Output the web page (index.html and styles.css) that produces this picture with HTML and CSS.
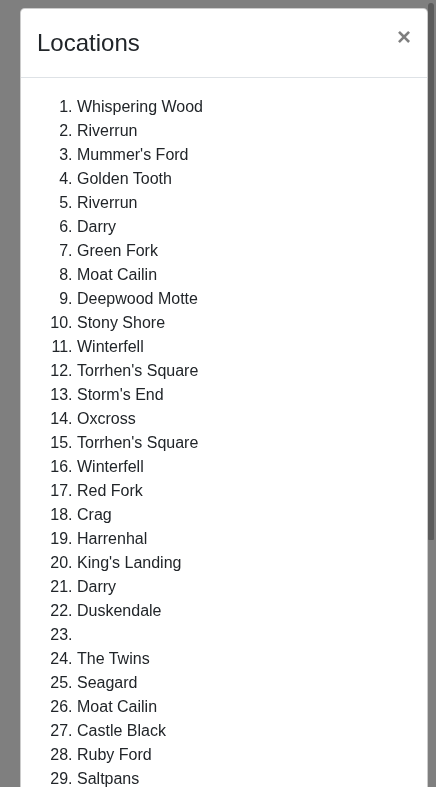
FILE: index.html
```html
<!DOCTYPE html>
<html>
<head>
<meta charset="utf-8">
<link rel="stylesheet" href="styles.css">
</head>
<body>
<div class="modal">
  <div class="dialog">
    <div class="content">
      <div class="header">
        <h3 class="title">Locations</h3>
        <button class="close" type="button">×</button>
      </div>
      <div class="body">
        <ol class="list">
          <li>Whispering Wood</li>
          <li>Riverrun</li>
          <li>Mummer's Ford</li>
          <li>Golden Tooth</li>
          <li>Riverrun</li>
          <li>Darry</li>
          <li>Green Fork</li>
          <li>Moat Cailin</li>
          <li>Deepwood Motte</li>
          <li>Stony Shore</li>
          <li>Winterfell</li>
          <li>Torrhen's Square</li>
          <li>Storm's End</li>
          <li>Oxcross</li>
          <li>Torrhen's Square</li>
          <li>Winterfell</li>
          <li>Red Fork</li>
          <li>Crag</li>
          <li>Harrenhal</li>
          <li>King's Landing</li>
          <li>Darry</li>
          <li>Duskendale</li>
          <li></li>
          <li>The Twins</li>
          <li>Seagard</li>
          <li>Moat Cailin</li>
          <li>Castle Black</li>
          <li>Ruby Ford</li>
          <li>Saltpans</li>
          <li>Riverrun</li>
          <li>Dragonstone</li>
          <li>Stoney Sept</li>
          <li>Acorn Hall</li>
          <li>Ruby Ford</li>
          <li>Wendish Town</li>
          <li>Duskendale</li>
          <li>Fist of the First Men</li>
          <li>Craster's Keep</li>
          <li>Eyrie</li>
          <li>Pyke</li>
          <li>Raventree</li>
        </ol>
      </div>
    </div>
  </div>
</div>
<div class="scrollbar"><div class="thumb"></div></div>
</body>
</html>
```

FILE: styles.css
```css
html, body {
  margin: 0;
  padding: 0;
  height: 100%;
  background: #ffffff;
  font-family: "Liberation Sans", Arial, sans-serif;
  color: #212529;
}

.modal {
  position: fixed;
  inset: 0;
  overflow: hidden;
  background: rgba(0, 0, 0, 0.5);
}

.dialog {
  margin: 8px 8px 8px 20px;
}

.content {
  background: #fff;
  border: 1px solid rgba(0, 0, 0, 0.2);
  border-radius: 4.8px;
  display: flex;
  flex-direction: column;
}

.header {
  display: flex;
  align-items: flex-start;
  justify-content: space-between;
  padding: 16px;
  border-bottom: 1px solid #dee2e6;
}

.title {
  margin: 0;
  font-size: 24px;
  line-height: 36px;
  font-weight: 500;
  color: #212529;
}

.close {
  background: transparent;
  border: 0;
  padding: 16px;
  margin: -16px -16px -16px auto;
  font-family: "Liberation Sans", Arial, sans-serif;
  font-size: 24px;
  font-weight: 700;
  line-height: 1;
  color: #000;
  opacity: 0.5;
  cursor: pointer;
}

.body {
  padding: 17px 16px 16px;
}

.list {
  margin: 0 0 16px 0;
  padding-left: 40px;
  font-size: 16px;
  line-height: 24px;
}

.list li {
  min-height: 24px;
}

.scrollbar {
  position: fixed;
  top: 0;
  right: 0;
  width: 8px;
  height: 100%;
}

.thumb {
  position: absolute;
  top: 3px;
  left: 0;
  width: 6px;
  height: 537px;
  background: #5c5c5c;
  border-radius: 3px 3px 1px 1px;
}
```
